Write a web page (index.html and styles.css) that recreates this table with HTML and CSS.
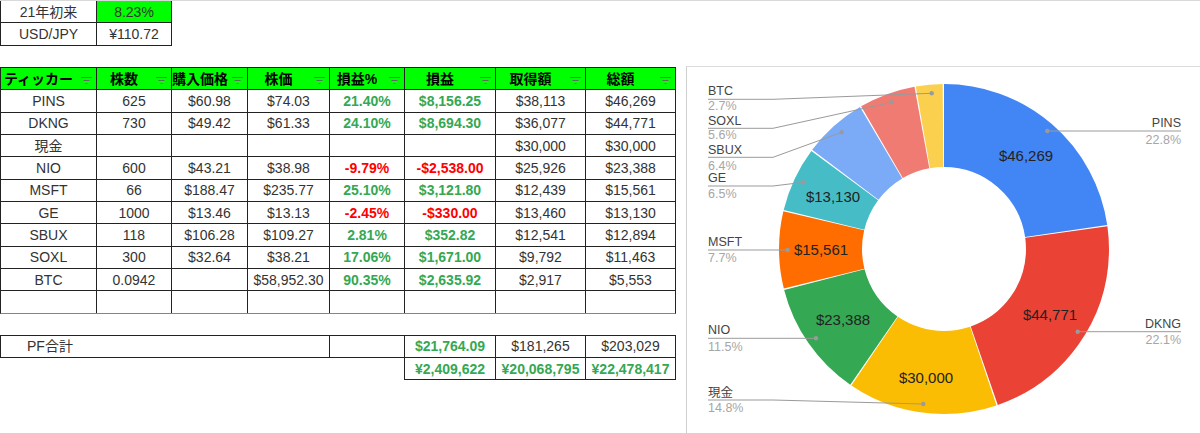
FILE: index.html
```html
<!DOCTYPE html>
<html lang="ja">
<head>
<meta charset="utf-8">
<title>Portfolio</title>
<link rel="stylesheet" href="styles.css">
</head>
<body>
<div class="sheet">
  <div class="left">
    <div class="grid grid-top">
      <div class="c">21年初来</div><div class="c hl">8.23%</div>
      <div class="c">USD/JPY</div><div class="c">¥110.72</div>
    </div>

    <div class="grid grid-main">
      <div class="c h"><span class="lbl">ティッカー</span><svg class="flt" viewBox="0 0 11 8"><path d="M0 1.5h11M2.5 4.5h6M4.5 7.5h2"/></svg></div>
      <div class="c h"><span class="lbl">株数</span><svg class="flt" viewBox="0 0 11 8"><path d="M0 1.5h11M2.5 4.5h6M4.5 7.5h2"/></svg></div>
      <div class="c h"><span class="lbl">購入価格</span><svg class="flt" viewBox="0 0 11 8"><path d="M0 1.5h11M2.5 4.5h6M4.5 7.5h2"/></svg></div>
      <div class="c h"><span class="lbl">株価</span><svg class="flt" viewBox="0 0 11 8"><path d="M0 1.5h11M2.5 4.5h6M4.5 7.5h2"/></svg></div>
      <div class="c h"><span class="lbl">損益%</span><svg class="flt" viewBox="0 0 11 8"><path d="M0 1.5h11M2.5 4.5h6M4.5 7.5h2"/></svg></div>
      <div class="c h"><span class="lbl">損益</span><svg class="flt" viewBox="0 0 11 8"><path d="M0 1.5h11M2.5 4.5h6M4.5 7.5h2"/></svg></div>
      <div class="c h"><span class="lbl">取得額</span><svg class="flt" viewBox="0 0 11 8"><path d="M0 1.5h11M2.5 4.5h6M4.5 7.5h2"/></svg></div>
      <div class="c h"><span class="lbl">総額</span><svg class="flt" viewBox="0 0 11 8"><path d="M0 1.5h11M2.5 4.5h6M4.5 7.5h2"/></svg></div>

      <div class="c">PINS</div><div class="c">625</div><div class="c">$60.98</div><div class="c">$74.03</div><div class="c g">21.40%</div><div class="c g">$8,156.25</div><div class="c">$38,113</div><div class="c">$46,269</div>
      <div class="c">DKNG</div><div class="c">730</div><div class="c">$49.42</div><div class="c">$61.33</div><div class="c g">24.10%</div><div class="c g">$8,694.30</div><div class="c">$36,077</div><div class="c">$44,771</div>
      <div class="c">現金</div><div class="c"></div><div class="c"></div><div class="c"></div><div class="c"></div><div class="c"></div><div class="c">$30,000</div><div class="c">$30,000</div>
      <div class="c">NIO</div><div class="c">600</div><div class="c">$43.21</div><div class="c">$38.98</div><div class="c r">-9.79%</div><div class="c r">-$2,538.00</div><div class="c">$25,926</div><div class="c">$23,388</div>
      <div class="c">MSFT</div><div class="c">66</div><div class="c">$188.47</div><div class="c">$235.77</div><div class="c g">25.10%</div><div class="c g">$3,121.80</div><div class="c">$12,439</div><div class="c">$15,561</div>
      <div class="c">GE</div><div class="c">1000</div><div class="c">$13.46</div><div class="c">$13.13</div><div class="c r">-2.45%</div><div class="c r">-$330.00</div><div class="c">$13,460</div><div class="c">$13,130</div>
      <div class="c">SBUX</div><div class="c">118</div><div class="c">$106.28</div><div class="c">$109.27</div><div class="c g">2.81%</div><div class="c g">$352.82</div><div class="c">$12,541</div><div class="c">$12,894</div>
      <div class="c">SOXL</div><div class="c">300</div><div class="c">$32.64</div><div class="c">$38.21</div><div class="c g">17.06%</div><div class="c g">$1,671.00</div><div class="c">$9,792</div><div class="c">$11,463</div>
      <div class="c">BTC</div><div class="c">0.0942</div><div class="c"></div><div class="c">$58,952.30</div><div class="c g">90.35%</div><div class="c g">$2,635.92</div><div class="c">$2,917</div><div class="c">$5,553</div>
      <div class="c"></div><div class="c"></div><div class="c"></div><div class="c"></div><div class="c"></div><div class="c"></div><div class="c"></div><div class="c"></div>
    </div>

    <div class="sum">
      <div class="s a1">PF合計</div>
      <div class="s b1"></div>
      <div class="s b1 g">$21,764.09</div>
      <div class="s b1">$181,265</div>
      <div class="s b1">$203,029</div>
      <div class="s spacer"></div>
      <div class="s b2 g">¥2,409,622</div>
      <div class="s b2 g">¥20,068,795</div>
      <div class="s b2 g">¥22,478,417</div>
    </div>
  </div>

  <div class="chart">
    <svg class="pie" width="513" height="366" viewBox="687 67 513 366">
      <g transform="rotate(-90 944 249)" fill="none" stroke-width="83">
        <circle cx="944" cy="249" r="123.5" pathLength="100" stroke="#4285f4" stroke-dasharray="22.66 77.34" stroke-dashoffset="0"/>
        <circle cx="944" cy="249" r="123.5" pathLength="100" stroke="#ea4335" stroke-dasharray="21.92 78.08" stroke-dashoffset="-22.789"/>
        <circle cx="944" cy="249" r="123.5" pathLength="100" stroke="#fbbc04" stroke-dasharray="14.646 85.354" stroke-dashoffset="-44.841"/>
        <circle cx="944" cy="249" r="123.5" pathLength="100" stroke="#34a853" stroke-dasharray="11.39 88.61" stroke-dashoffset="-59.617"/>
        <circle cx="944" cy="249" r="123.5" pathLength="100" stroke="#ff6d01" stroke-dasharray="7.534 92.466" stroke-dashoffset="-71.137"/>
        <circle cx="944" cy="249" r="123.5" pathLength="100" stroke="#46bdc6" stroke-dasharray="6.337 93.663" stroke-dashoffset="-78.801"/>
        <circle cx="944" cy="249" r="123.5" pathLength="100" stroke="#7baaf7" stroke-dasharray="6.221 93.779" stroke-dashoffset="-85.268"/>
        <circle cx="944" cy="249" r="123.5" pathLength="100" stroke="#f07b72" stroke-dasharray="5.516 94.484" stroke-dashoffset="-91.619"/>
        <circle cx="944" cy="249" r="123.5" pathLength="100" stroke="#fcd04f" stroke-dasharray="2.605 97.395" stroke-dashoffset="-97.265"/>
      </g>

      <g class="val" text-anchor="middle">
        <text x="1026" y="161">$46,269</text>
        <text x="1050" y="320">$44,771</text>
        <text x="926" y="383">$30,000</text>
        <text x="843" y="325">$23,388</text>
        <text x="821" y="255">$15,561</text>
        <text x="833" y="202">$13,130</text>
      </g>

      <g class="leader" fill="none">
        <polyline points="1047.3,131 1181,131"/>
        <polyline points="1077.7,331.7 1181,331.7"/>
        <polyline points="708,99.3 773,99.3 931.7,93.3"/>
        <polyline points="708,128.3 773,128.3 891.7,102.3"/>
        <polyline points="708,157.3 773,157.3 841.7,132.3"/>
        <polyline points="708,186 773,186 803.3,182.3"/>
        <polyline points="708,250 787.7,250"/>
        <polyline points="708,338.3 816,338.3"/>
        <polyline points="708,400 773,400 923.3,404"/>
      </g>
      <g class="dot">
        <circle cx="1047.3" cy="131" r="2.2"/>
        <circle cx="1077.7" cy="331.7" r="2.2"/>
        <circle cx="931.7" cy="93.3" r="2.2"/>
        <circle cx="891.7" cy="102.3" r="2.2"/>
        <circle cx="841.7" cy="132.3" r="2.2"/>
        <circle cx="803.3" cy="182.3" r="2.2"/>
        <circle cx="787.7" cy="250" r="2.2"/>
        <circle cx="816" cy="338.3" r="2.2"/>
        <circle cx="923.3" cy="404" r="2.2"/>
      </g>

      <g class="nm" text-anchor="end">
        <text x="1181" y="127">PINS</text>
        <text x="1181" y="328.3">DKNG</text>
      </g>
      <g class="pc" text-anchor="end">
        <text x="1181" y="144.3">22.8%</text>
        <text x="1181" y="343.6">22.1%</text>
      </g>
      <g class="nm">
        <text x="708" y="95">BTC</text>
        <text x="708" y="125">SOXL</text>
        <text x="708" y="154.3">SBUX</text>
        <text x="708" y="182">GE</text>
        <text x="708" y="246">MSFT</text>
        <text x="708" y="334.3">NIO</text>
        <text x="708" y="396.5">現金</text>
      </g>
      <g class="pc">
        <text x="708" y="110.3">2.7%</text>
        <text x="708" y="139.3">5.6%</text>
        <text x="708" y="170">6.4%</text>
        <text x="708" y="198.3">6.5%</text>
        <text x="708" y="262">7.7%</text>
        <text x="708" y="351">11.5%</text>
        <text x="708" y="412">14.8%</text>
      </g>
    </svg>
  </div>
</div>
</body>
</html>
```

FILE: styles.css
```css
* { box-sizing: border-box; }

html, body {
  margin: 0;
  padding: 0;
  background: #fff;
}

body {
  width: 1200px;
  height: 433px;
  overflow: hidden;
  font-family: "Liberation Sans", "Noto Sans CJK JP", Arial, sans-serif;
  font-size: 14px;
  color: #333;
}

.sheet {
  display: flex;
  height: 433px;
  border-top: 1px solid #d9d9d9;
}

.left {
  width: 686px;
  flex: none;
}

.grid {
  display: grid;
  gap: 1px;
  background: #222;
  width: max-content;
}

.grid-top {
  grid-template-columns: 95px 74px;
  grid-auto-rows: 21.35px;
  border: 1px solid #222;
  border-top: none;
}

.grid-main {
  margin-top: 21.3px;
  grid-template-columns: 95px 74px 75px 81px 74px 90px 89px 89px;
  grid-auto-rows: 21.35px;
  border: 1px solid #222;
  border-bottom-color: #5b9f6d;
}

.c {
  background: #fff;
  display: flex;
  align-items: center;
  justify-content: center;
  white-space: nowrap;
  line-height: 1;
}

.hl {
  background: #00ff00;
}

.h {
  background: #00ff00;
  color: #000;
  font-weight: bold;
  justify-content: flex-start;
}

.lbl {
  flex: 1;
  text-align: center;
  min-width: 0;
}

.flt {
  width: 11px;
  height: 8px;
  margin: 2px 4px 0 5px;
  flex: none;
  stroke: #5f6b5f;
  stroke-width: 1.1;
  fill: none;
}

.g {
  color: #34a853;
  font-weight: bold;
}

.r {
  color: #ff0000;
  font-weight: bold;
}

.sum {
  margin-top: 21.15px;
  display: grid;
  grid-template-columns: 330px 75px 91px 90px 90px;
  grid-template-rows: 23px 22.5px;
  width: max-content;
}

.s {
  display: flex;
  align-items: center;
  justify-content: center;
  white-space: nowrap;
  line-height: 1;
  border-right: 1px solid #222;
  border-bottom: 1px solid #222;
}

.a1 {
  border-left: 1px solid #222;
  border-top: 1px solid #222;
  justify-content: flex-start;
  padding-left: 26px;
}

.b1 {
  border-top: 1px solid #222;
}

.spacer {
  grid-column: span 2;
  border-bottom: none;
}

.chart {
  flex: 1;
  margin-top: 65px;
  border-left: 1px solid #cfcfcf;
  border-top: 1px solid #dcdcdc;
  background: #fff;
}

.pie {
  display: block;
  font-family: "Liberation Sans", "Noto Sans CJK JP", Arial, sans-serif;
}

.val text {
  font-size: 15px;
  fill: #222;
}

.leader polyline {
  stroke: #9a9a9a;
  stroke-width: 1;
}

.dot circle {
  fill: #9a9a9a;
}

.nm text {
  font-size: 12.5px;
  fill: #444;
}

.pc text {
  font-size: 12.5px;
  fill: #a6a6a6;
}
```
